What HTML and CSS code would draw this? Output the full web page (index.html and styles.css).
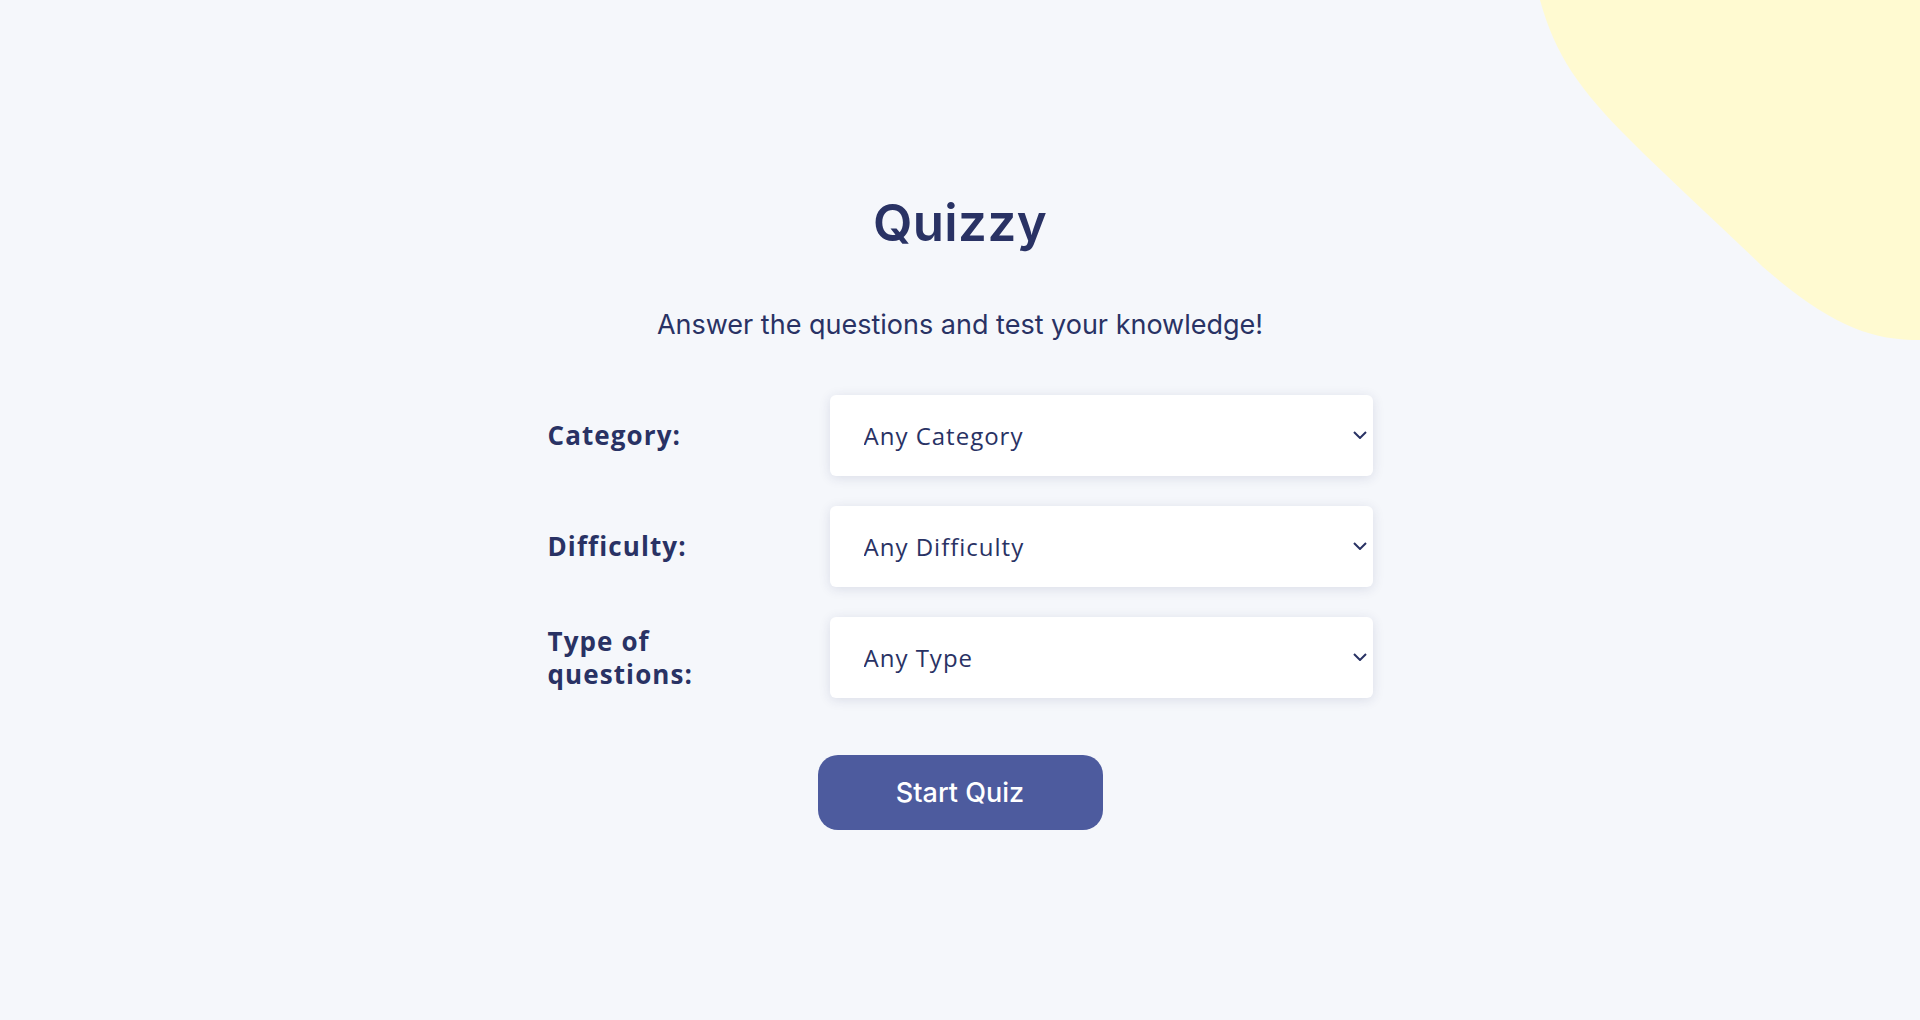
FILE: index.html
```html
<!DOCTYPE html>
<html lang="en">
<head>
<meta charset="utf-8">
<title>Quizzy</title>
<link rel="stylesheet" href="styles.css">
</head>
<body>
<div class="blob" aria-hidden="true">
  <svg width="380" height="340" viewBox="0 0 380 340"><path d="M0,0 C15,55 40,90 90,140 C130,180 180,225 223,267 C290,325 330,340 380,340 L380,0 Z" fill="#FFFAD1"/></svg>
</div>
<main class="start">
  <h1 class="title">Quizzy</h1>
  <p class="subtitle">Answer the questions and test your knowledge!</p>
  <form class="options">
    <label class="label" for="category">Category:</label>
    <div class="select-wrap">
      <select class="select" id="category"><option>Any Category</option></select>
      <svg class="chev" width="14" height="8" viewBox="0 0 14 8"><path d="M1 1 L7 7 L13 1" fill="none" stroke="#293264" stroke-width="2"/></svg>
    </div>
    <label class="label" for="difficulty">Difficulty:</label>
    <div class="select-wrap">
      <select class="select" id="difficulty"><option>Any Difficulty</option></select>
      <svg class="chev" width="14" height="8" viewBox="0 0 14 8"><path d="M1 1 L7 7 L13 1" fill="none" stroke="#293264" stroke-width="2"/></svg>
    </div>
    <label class="label" for="type">Type of questions:</label>
    <div class="select-wrap">
      <select class="select" id="type"><option>Any Type</option></select>
      <svg class="chev" width="14" height="8" viewBox="0 0 14 8"><path d="M1 1 L7 7 L13 1" fill="none" stroke="#293264" stroke-width="2"/></svg>
    </div>
  </form>
  <button class="start-btn" type="button">Start Quiz</button>
</main>
</body>
</html>
```
FILE: styles.css
```css
* { box-sizing: border-box; }
html, body { margin: 0; padding: 0; }
body {
  background: #F5F7FB;
  color: #293264;
  font-family: "Open Sans", "Noto Sans", sans-serif;
  min-height: 100vh;
  overflow: hidden;
  position: relative;
}
.blob {
  position: absolute;
  top: 0;
  right: 0;
  width: 380px;
  height: 340px;
  z-index: 0;
}
.blob svg { display: block; }
.start {
  position: relative;
  z-index: 1;
  display: flex;
  flex-direction: column;
  align-items: center;
  padding-top: 197px;
}
.title {
  margin: 0;
  font-family: Inter, "Liberation Sans", sans-serif;
  font-size: 51px;
  line-height: 52px;
  font-weight: 600;
  letter-spacing: 0.4px;
}
.subtitle {
  margin: 62px 0 0;
  font-family: Inter, "Liberation Sans", sans-serif;
  font-size: 27px;
  line-height: 27px;
  font-weight: 400;
}
.options {
  margin-top: 57px;
  display: grid;
  grid-template-columns: 282px 543px;
  row-gap: 30px;
  align-items: center;
}
.label {
  font-size: 26px;
  line-height: 33px;
  font-weight: 700;
  letter-spacing: 1.1px;
  padding-right: 90px;
}
.select-wrap {
  position: relative;
  height: 81px;
}
.select {
  appearance: none;
  -webkit-appearance: none;
  width: 100%;
  height: 81px;
  border: none;
  border-radius: 6px;
  background: #fff;
  box-shadow: 0 2px 12px rgba(41, 50, 100, 0.13);
  padding: 0 40px 0 34px;
  font-family: "Open Sans", "Noto Sans", sans-serif;
  font-size: 24px;
  color: #293264;
  letter-spacing: 1px;
  outline: none;
}
.chev {
  position: absolute;
  right: 6px;
  top: 36px;
  pointer-events: none;
}
.start-btn {
  margin-top: 57px;
  width: 285px;
  height: 75px;
  border: none;
  border-radius: 20px;
  background: #4D5B9E;
  color: #fff;
  font-family: Inter, "Liberation Sans", sans-serif;
  font-size: 27px;
  font-weight: 500;
  cursor: pointer;
}
```
